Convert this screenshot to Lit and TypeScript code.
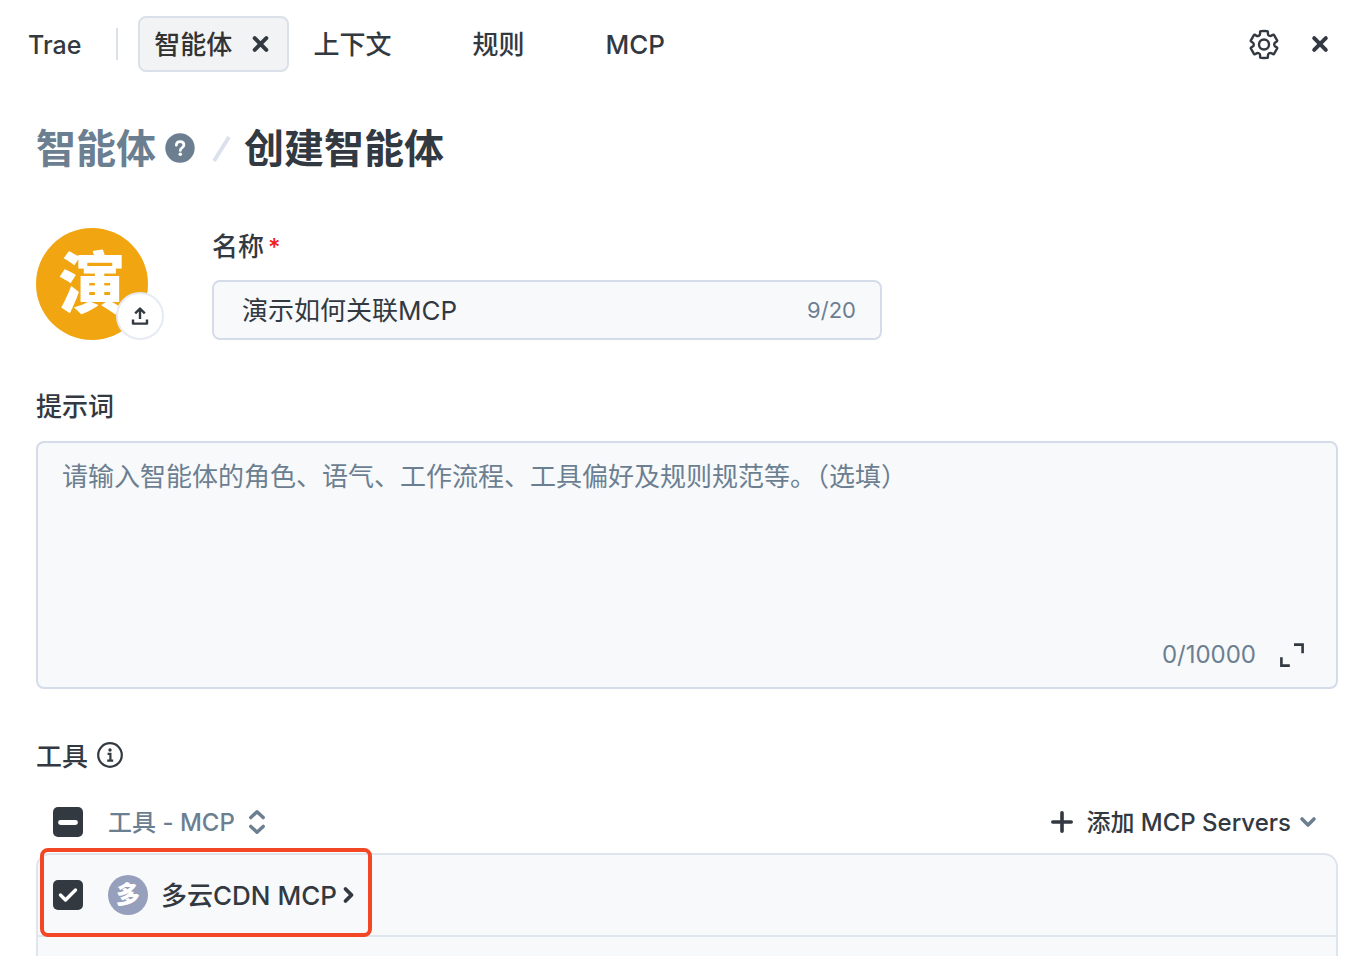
import { LitElement, html, css, svg } from "lit";
import { customElement, state } from "lit/decorators.js";

/** Builds a softly rounded six-tooth gear outline around the origin. */
function gearPath(): string {
  const polar: [number, number][] = [];
  for (let k = 0; k < 6; k++) {
    const a = k * 60 - 90;
    polar.push([14, a - 17], [13.6, a - 9], [13.6, a + 9], [14, a + 17], [10.2, a + 21], [10.4, a + 39]);
  }
  const pts = polar.map(([r, deg]) => {
    const t = (deg * Math.PI) / 180;
    return [r * Math.cos(t), r * Math.sin(t)];
  });
  const mid = (p: number[], q: number[]) => `${((p[0] + q[0]) / 2).toFixed(2)} ${((p[1] + q[1]) / 2).toFixed(2)}`;
  let d = `M${mid(pts[pts.length - 1], pts[0])}`;
  pts.forEach((p, i) => {
    d += `Q${p[0].toFixed(2)} ${p[1].toFixed(2)} ${mid(p, pts[(i + 1) % pts.length])}`;
  });
  return d + "Z";
}

const closeShape = svg`<path d="M-5.8 -5.8L5.8 5.8M5.8 -5.8L-5.8 5.8" fill="none" stroke="currentColor" stroke-width="4" stroke-linecap="round"/>`;

@customElement("app-root")
export class AppRoot extends LitElement {
  @state() private active = 0;
  @state() private name = "演示如何关联MCP";
  @state() private prompt = "";

  private tabs = ["智能体", "上下文", "规则", "MCP"];

  static styles = css`
    :host {
      display: flex;
      flex-direction: column;
      height: 100vh;
      overflow: hidden;
      background: #fff;
      color: #323941;
      font-family: Inter, "Noto Sans CJK SC", sans-serif;
      font-size: 26px;
      font-weight: 500;
      line-height: 36px;
    }
    * { box-sizing: border-box; }
    svg { display: block; flex: none; }
    button {
      font: inherit;
      color: inherit;
      background: none;
      border: 0;
      padding: 0;
      display: flex;
      align-items: center;
      cursor: pointer;
    }
    h1, h2 { margin: 0; font: inherit; }
    .topbar {
      display: flex;
      align-items: center;
      flex: none;
      height: 88px;
      padding: 0 24px 0 28px;
    }
    .text, .tab .label, .brand { padding-top: 2px; }
    .brand { font-size: 25px; }
    .divider { width: 2px; height: 32px; margin: 0 20px 0 35px; background: #dae1ea; }
    .tabs { display: flex; gap: 8px; flex: 1; }
    .tab {
      display: flex;
      align-items: center;
      gap: 16px;
      height: 56px;
      padding: 0 14px;
      border: 2px solid transparent;
      border-radius: 8px;
    }
    .tab.on { background: #f1f3f5; border-color: #dae1ea; }
    .tab .close { visibility: hidden; }
    .tab.on .close { visibility: visible; }
    .tab.on .label { color: #333; }
    .actions { display: flex; align-items: center; gap: 26px; }
    .crumbs {
      display: flex;
      align-items: center;
      padding: 33px 36px 0;
      font-size: 40px;
      line-height: 56px;
      font-weight: 700;
    }
    .crumbs a { color: #6c7f91; text-decoration: none; }
    .crumbs .help { margin: 0 16px 0 8px; color: #6c7f91; }
    .crumbs .slash { margin-right: 12px; }
    .body {
      display: flex;
      flex-direction: column;
      flex: 1;
      min-height: 0;
      padding: 51px 20px 0 36px;
    }
    .identity { display: flex; gap: 48px; margin-bottom: 49px; }
    .avatar { position: relative; width: 128px; height: 112px; flex: none; }
    .face {
      display: flex;
      align-items: center;
      justify-content: center;
      width: 112px;
      height: 112px;
      border-radius: 50%;
      background: #f1a510;
      color: #fff;
      font-size: 67px;
      line-height: 68px;
      font-weight: 900;
    }
    .upload {
      position: absolute;
      right: 0;
      bottom: 0;
      width: 48px;
      height: 48px;
      justify-content: center;
      border-radius: 50%;
      border: 2px solid #e6eaf2;
      background: #fff;
    }
    .field { display: flex; flex-direction: column; justify-content: space-between; flex: 0 1 670px; }
    .field label { line-height: 38px; }
    .field .req { color: #f0201c; margin-left: 4px; font-size: 24px; }
    .box { border: 2px solid #d5dce9; border-radius: 8px; background: #f8f9fb; }
    .namebox { display: flex; align-items: center; height: 60px; padding: 0 24px 0 28px; }
    input.name {
      flex: 1;
      min-width: 0;
      height: 100%;
      padding: 0 0 4px;
      border: 0;
      outline: 0;
      background: none;
      color: inherit;
      font: inherit;
      font-weight: 400;
    }
    .count { color: #6c7f91; font-size: 22px; font-weight: 400; }
    .promptbox { display: flex; flex-direction: column; height: 248px; margin: 16px 0 48px; padding: 14px 30px 14px 24px; flex: none; }
    textarea {
      flex: 1;
      width: 100%;
      padding: 2px 0 0;
      border: 0;
      outline: 0;
      resize: none;
      background: none;
      color: inherit;
      font: inherit;
      font-weight: 400;
    }
    textarea::placeholder { color: #6c7f91; opacity: 1; }
    .promptfoot { display: flex; align-items: center; justify-content: flex-end; gap: 22px; }
    .promptfoot .count { font-size: 24px; }
    .heading { display: flex; align-items: center; gap: 8px; margin-bottom: 28px; }
    .toolbar { display: flex; align-items: center; padding: 0 20px 0 17px; margin-bottom: 12px; font-size: 24px; }
    .sort { gap: 10px; margin: 0 auto 0 25px; color: #6c7f91; }
    .add { gap: 7px; }
    .add .plus { margin-right: 5px; }
    input.check {
      appearance: none;
      flex: none;
      width: 30px;
      height: 30px;
      margin: 0;
      border-radius: 5px;
      background: #323941 center / 30px 30px no-repeat;
    }
    input.check:checked {
      background-image: url("data:image/svg+xml,%3Csvg xmlns='http://www.w3.org/2000/svg' viewBox='0 0 30 30'%3E%3Cpath d='M7.5 15L12.5 20L22.5 10' fill='none' stroke='%23fff' stroke-width='3.4' stroke-linecap='round' stroke-linejoin='round'/%3E%3C/svg%3E");
    }
    input.check:indeterminate {
      background-image: url("data:image/svg+xml,%3Csvg xmlns='http://www.w3.org/2000/svg' viewBox='0 0 30 30'%3E%3Cpath d='M7.5 15.5H22.5' fill='none' stroke='%23fff' stroke-width='4.8' stroke-linecap='round'/%3E%3C/svg%3E");
    }
    .list {
      flex: 1;
      border: 2px solid #dfe5ec;
      border-bottom: 0;
      border-radius: 14px 14px 0 0;
      background: #f8f9fb;
    }
    .row {
      position: relative;
      display: flex;
      align-items: center;
      height: 82px;
      padding: 0 15px;
      border-bottom: 2px solid #dfe5ec;
    }
    .row .server { gap: 5px; }
    .badge {
      display: flex;
      align-items: center;
      justify-content: center;
      width: 40px;
      height: 40px;
      margin: 0 13px 0 25px;
      border-radius: 50%;
      background: #96a0bc;
      color: #fff;
      font-size: 24px;
      line-height: 24px;
      font-weight: 900;
    }
    .mark {
      position: absolute;
      left: 2px;
      top: -7px;
      width: 332px;
      height: 89px;
      border: 4px solid #f34624;
      border-radius: 8px;
      pointer-events: none;
    }
  `;

  render() {
    return html`
      <header class="topbar">
        <span class="brand">Trae</span>
        <span class="divider"></span>
        <nav class="tabs">
          ${this.tabs.map(
            (t, i) => html`<div class="tab ${i === this.active ? "on" : ""}">
              <button class="label" @click=${() => (this.active = i)}>${t}</button>
              <button class="close" aria-label="关闭">
                <svg width="25" height="26" viewBox="-12.5 -13 25 26">${closeShape}</svg>
              </button>
            </div>`
          )}
        </nav>
        <div class="actions">
          <button aria-label="设置">
            <svg width="32" height="32" viewBox="-16 -16.5 32 32" fill="none" stroke="currentColor" stroke-width="2.4">
              <path d=${gearPath()} /><circle r="5" />
            </svg>
          </button>
          <button aria-label="关闭">
            <svg width="28" height="26" viewBox="-14 -13 28 26">${closeShape}</svg>
          </button>
        </div>
      </header>

      <h1 class="crumbs">
        <a href="#">智能体</a>
        <button class="help" aria-label="帮助">
          <svg width="32" height="32" viewBox="0 0 32 32">
            <circle cx="16" cy="15" r="14.7" fill="currentColor" />
            <path d="M12.3 12.2C12.4 9.8 14 8.7 16.1 8.7C18.3 8.7 19.9 10 19.9 12C19.9 14.6 16.3 14.8 16.3 17.4" fill="none" stroke="#fff" stroke-width="2.7" stroke-linecap="round" />
            <circle cx="16.3" cy="21.2" r="1.8" fill="#fff" />
          </svg>
        </button>
        <svg class="slash" width="20" height="28" viewBox="0 0 20 28"><path d="M2 26L17 2" stroke="#dae1ec" stroke-width="3.8" /></svg>
        <span>创建智能体</span>
      </h1>

      <main class="body">
        <section class="identity">
          <div class="avatar">
            <div class="face">演</div>
            <button class="upload" aria-label="上传头像">
              <svg width="20" height="20" viewBox="0 0 20 20" fill="none" stroke="currentColor" stroke-width="2.4" stroke-linejoin="round">
                <path d="M10 13V3M5.2 7.4L10 2.6L14.8 7.4M3 13.5V17.6H17V13.5" />
              </svg>
            </button>
          </div>
          <div class="field">
            <label for="name">名称<span class="req">*</span></label>
            <div class="box namebox">
              <input id="name" class="name" maxlength="20" .value=${this.name}
                @input=${(e: Event) => (this.name = (e.target as HTMLInputElement).value)} />
              <span class="count">${this.name.length}/20</span>
            </div>
          </div>
        </section>

        <label for="prompt">提示词</label>
        <div class="box promptbox">
          <textarea id="prompt" maxlength="10000" placeholder="请输入智能体的角色、语气、工作流程、工具偏好及规则规范等。（选填）"
            .value=${this.prompt}
            @input=${(e: Event) => (this.prompt = (e.target as HTMLTextAreaElement).value)}></textarea>
          <div class="promptfoot">
            <span class="count">${this.prompt.length}/10000</span>
            <button aria-label="展开">
              <svg width="28" height="28" viewBox="0 0 28 28" fill="none" stroke="currentColor" stroke-width="2.6">
                <path d="M16 3.6H24.6V12.2M3.4 16.2V24.6H11.8" />
              </svg>
            </button>
          </div>
        </div>

        <h2 class="heading">
          <span class="text">工具</span>
          <svg width="28" height="28" viewBox="0 0 28 28" fill="none" stroke="currentColor" stroke-width="2.2">
            <circle cx="14" cy="13" r="11.8" />
            <circle cx="14" cy="8" r="1.7" fill="currentColor" stroke="none" />
            <path d="M11.6 11.8H14.4V18.4M11.2 18.6H17.2" />
          </svg>
        </h2>

        <div class="toolbar">
          <input class="check" type="checkbox" aria-label="全选" .indeterminate=${true} />
          <button class="sort">
            <span class="text">工具 - MCP</span>
            <svg width="24" height="28" viewBox="0 0 24 28" fill="none" stroke="currentColor" stroke-width="3.4" stroke-linecap="round" stroke-linejoin="round">
              <path d="M5.8 9.6L12 3.8L18.2 9.6M5.8 18.4L12 24.2L18.2 18.4" />
            </svg>
          </button>
          <button class="add">
            <svg class="plus" width="24" height="24" viewBox="0 0 24 24" stroke="currentColor" stroke-width="3.6" stroke-linecap="round">
              <path d="M12 2.8V21.2M2.8 12H21.2" />
            </svg>
            <span class="text">添加 MCP Servers</span>
            <svg width="20" height="24" viewBox="0 0 20 24" fill="none" stroke="#6c7f91" stroke-width="3.6" stroke-linecap="round" stroke-linejoin="round">
              <path d="M4 9L10 15L16 9" />
            </svg>
          </button>
        </div>

        <div class="list">
          <div class="row">
            <input id="cdn" class="check" type="checkbox" aria-label="多云CDN MCP" checked />
            <span class="badge">多</span>
            <button class="server">
              <span class="text">多云CDN MCP</span>
              <svg width="14" height="20" viewBox="0 0 14 20" fill="none" stroke="currentColor" stroke-width="3.8" stroke-linecap="round" stroke-linejoin="round">
                <path d="M3.5 4L9.5 10L3.5 16" />
              </svg>
            </button>
            <span class="mark"></span>
          </div>
        </div>
      </main>
    `;
  }
}
